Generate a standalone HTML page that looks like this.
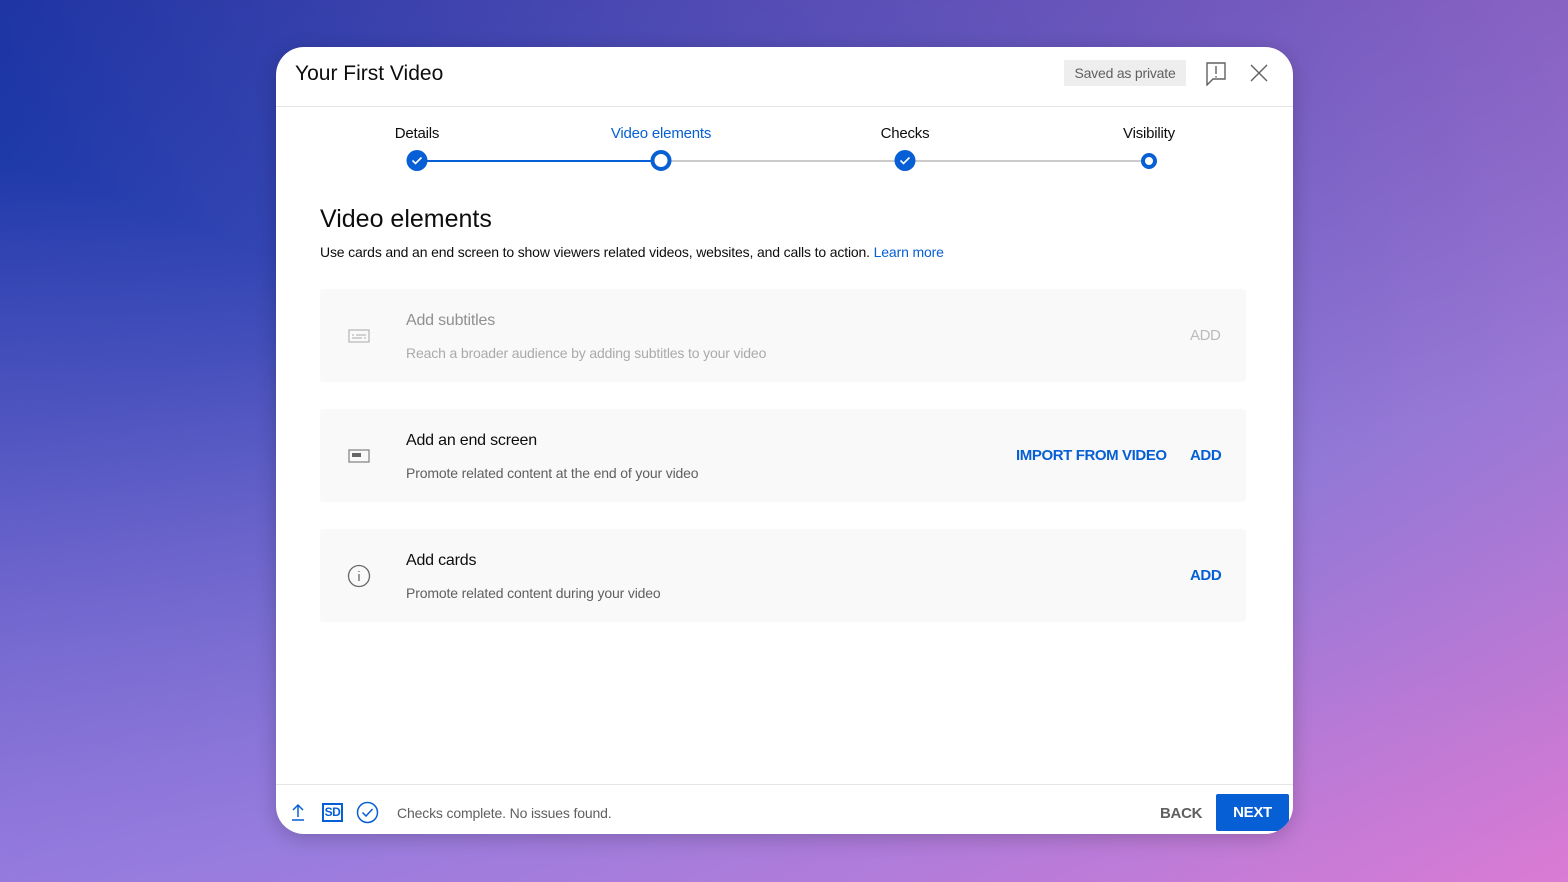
<!DOCTYPE html>
<html><head><meta charset="utf-8"><style>
*{margin:0;padding:0;box-sizing:border-box}
body{width:1568px;height:882px;overflow:hidden;font-family:"Liberation Sans",sans-serif;position:relative;
background:linear-gradient(160deg,#0d2fa0 0%,#3c4bb8 30%,#8a78d8 65%,#e07ad2 100%);}
.bg2{position:absolute;inset:0;background:linear-gradient(20deg,rgba(170,130,230,0.5) 0%,rgba(0,0,0,0) 50%,rgba(240,120,200,0.35) 100%)}
.modal{position:absolute;left:276px;top:47px;width:1017px;height:787px;background:#fff;border-radius:28px;overflow:hidden;box-shadow:0 4px 20px rgba(0,0,0,.2)}
.hdr{height:60px;border-bottom:1px solid #e5e5e5;position:relative}
.title{position:absolute;left:19px;top:15px;font-size:21px;color:#0d0d0d}
.saved{position:absolute;left:788px;top:13px;width:122px;height:26px;background:#eee;color:#606060;font-size:14px;line-height:26px;text-align:center;letter-spacing:-0.2px}
.abs{position:absolute}
.step{position:absolute;top:78px;font-size:15px;color:#0d0d0d;transform:translateX(-50%);white-space:nowrap;letter-spacing:-0.2px}
.dot{position:absolute;top:103px;width:21px;height:21px;border-radius:50%;background:#065fd4;transform:translateX(-50%)}
.ring{background:#fff;border:4px solid #065fd4}
.card{position:absolute;left:44px;width:926px;height:93px;background:#f9f9f9;border-radius:3px}
.card .t{position:absolute;left:86px;top:23px;font-size:16px;color:#0d0d0d;letter-spacing:-0.2px}
.card .s{position:absolute;left:86px;top:56px;font-size:14px;color:#606060;letter-spacing:-0.15px}
.card .a{position:absolute;top:38px;font-size:15px;color:#065fd4;font-weight:bold;letter-spacing:-0.4px}
.card .ic{position:absolute;left:28px;top:40px}
.ftr{position:absolute;left:0;top:737px;width:100%;height:50px;border-top:1px solid #e5e5e5}
</style></head><body><div class="bg2"></div>
<div class="modal">
<div class="hdr"><div class="title">Your First Video</div><div class="saved">Saved as private</div>
<svg class="abs" style="left:930px;top:15px" width="20" height="24" viewBox="0 0 20 24" fill="none" stroke="#606060" stroke-width="1.4"><path d="M1 1H19V17H7L1 23Z"/><path d="M10 4V12M10 14V15.5"/></svg>
<svg class="abs" style="left:974px;top:17px" width="18" height="18" viewBox="0 0 18 18" stroke="#606060" stroke-width="1.4"><path d="M1 1L17 17M17 1L1 17"/></svg>
</div>
<div class="abs" style="left:141px;top:113px;width:244px;height:2px;background:#065fd4"></div>
<div class="abs" style="left:385px;top:113px;width:488px;height:2px;background:#ccc"></div>
<div class="step" style="left:141px">Details</div>
<div class="step" style="left:385px;color:#065fd4">Video elements</div>
<div class="step" style="left:629px">Checks</div>
<div class="step" style="left:873px">Visibility</div>
<div class="dot" style="left:141px"><svg width="21" height="21" viewBox="0 0 21 21"><path d="M6 10.5L9 13.5L15 7.5" stroke="#fff" stroke-width="1.6" fill="none"/></svg></div>
<div class="dot ring" style="left:385px"></div>
<div class="dot" style="left:629px"><svg width="21" height="21" viewBox="0 0 21 21"><path d="M6 10.5L9 13.5L15 7.5" stroke="#fff" stroke-width="1.6" fill="none"/></svg></div>
<div class="dot ring" style="left:873px;top:106px;width:16px;height:16px"></div>
<div class="abs" style="left:44px;top:158px;font-size:25px;color:#0d0d0d">Video elements</div>
<div class="abs" style="left:44px;top:197px;font-size:14px;color:#0d0d0d;letter-spacing:-0.15px">Use cards and an end screen to show viewers related videos, websites, and calls to action. <span style="color:#065fd4">Learn more</span></div>
<div class="card" style="top:242px"><svg class="ic" width="22" height="14" viewBox="0 0 22 14" fill="none" stroke="#bbb" stroke-width="1.3"><rect x="1" y="1" width="20" height="12"/><path d="M4 6H6M8 6H18M4 9H14M16 9H18"/></svg>
<div class="t" style="color:#909090">Add subtitles</div><div class="s" style="color:#aaa">Reach a broader audience by adding subtitles to your video</div><div class="a" style="left:870px;color:#bbb;font-weight:normal">ADD</div></div>
<div class="card" style="top:362px"><svg class="ic" width="22" height="14" viewBox="0 0 22 14"><rect x="1" y="1" width="20" height="12" fill="none" stroke="#888" stroke-width="1.3"/><rect x="4" y="4" width="9" height="4" fill="#666"/></svg>
<div class="t">Add an end screen</div><div class="s">Promote related content at the end of your video</div><div class="a" style="left:696px">IMPORT FROM VIDEO</div><div class="a" style="left:870px">ADD</div></div>
<div class="card" style="top:482px"><svg class="ic" style="top:35px;left:27px" width="24" height="24" viewBox="0 0 24 24" fill="none" stroke="#666" stroke-width="1.3"><circle cx="12" cy="12" r="10.5"/><path d="M12 10V17M12 7V8"/></svg>
<div class="t">Add cards</div><div class="s">Promote related content during your video</div><div class="a" style="left:870px">ADD</div></div>
<div class="ftr">
<svg class="abs" style="left:15px;top:18px" width="14" height="18" viewBox="0 0 14 18" fill="none" stroke="#065fd4" stroke-width="1.5"><path d="M7 14V2M2 7L7 2L12 7M1 17H13"/></svg>
<div class="abs" style="left:46px;top:18px;width:21px;height:19px;border:2px solid #065fd4;color:#065fd4;font-size:12px;font-weight:bold;line-height:15px;text-align:center;letter-spacing:-0.5px">SD</div>
<svg class="abs" style="left:80px;top:16px" width="23" height="23" viewBox="0 0 23 23" fill="none" stroke="#065fd4" stroke-width="1.5"><circle cx="11.5" cy="11.5" r="10"/><path d="M6.5 11.5L10 15L16.5 8"/></svg>
<div class="abs" style="left:121px;top:20px;font-size:14px;color:#606060;letter-spacing:-0.15px">Checks complete. No issues found.</div>
<div class="abs" style="left:884px;top:20px;font-size:15px;color:#606060;font-weight:bold;letter-spacing:-0.3px">BACK</div>
<div class="abs" style="left:940px;top:9px;width:73px;height:37px;background:#065fd4;color:#fff;font-size:15px;font-weight:bold;line-height:37px;text-align:center;border-radius:2px;letter-spacing:-0.3px">NEXT</div>
</div>
</div>
</body></html>
